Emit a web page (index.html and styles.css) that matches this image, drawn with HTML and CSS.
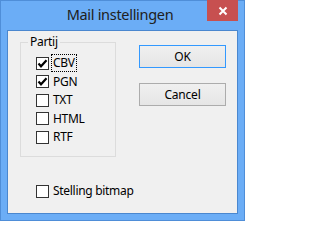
FILE: index.html
```html
<!DOCTYPE html>
<html>
<head>
<meta charset="utf-8">
<link rel="stylesheet" href="styles.css">
</head>
<body>
<div class="window">
  <div class="titlebar">
    <span class="spacer"></span>
    <span class="title">Mail instellingen</span>
    <span class="close">
      <svg width="10" height="10" viewBox="0 0 10 10"><path d="M1.5 1.5 L8.5 8.5 M8.5 1.5 L1.5 8.5" stroke="#fff" stroke-width="2" fill="none"/></svg>
    </span>
  </div>
  <div class="client">
    <div class="top">
      <div class="group">
        <span class="legend">Partij</span>
        <div class="row"><span class="box checked"><svg width="11" height="11" viewBox="0 0 11 11"><path d="M1.5 5.5 L4 8.3 L9.5 2.3" stroke="#000" stroke-width="2.2" fill="none"/></svg></span><span class="label focus">CBV</span></div>
        <div class="row"><span class="box checked"><svg width="11" height="11" viewBox="0 0 11 11"><path d="M1.5 5.5 L4 8.3 L9.5 2.3" stroke="#000" stroke-width="2.2" fill="none"/></svg></span><span class="label">PGN</span></div>
        <div class="row"><span class="box"></span><span class="label">TXT</span></div>
        <div class="row"><span class="box"></span><span class="label">HTML</span></div>
        <div class="row"><span class="box"></span><span class="label">RTF</span></div>
      </div>
      <div class="buttons">
        <button class="btn default">OK</button>
        <button class="btn">Cancel</button>
      </div>
    </div>
    <div class="row bottom-row"><span class="box"></span><span class="label">Stelling bitmap</span></div>
  </div>
</div>
</body>
</html>
```

FILE: styles.css
```css
html, body {
  margin: 0;
  padding: 0;
}
body {
  width: 245px;
  height: 221px;
  overflow: hidden;
  font-family: "Noto Sans", "Liberation Sans", sans-serif;
  font-size: 12px;
  letter-spacing: -0.3px;
  color: #000;
}
.window {
  box-sizing: border-box;
  width: 245px;
  height: 221px;
  background: #6badf6;
  border: 1px solid #4f8ed8;
  padding: 0 6px 6px 6px;
  display: flex;
  flex-direction: column;
}
.titlebar {
  height: 29px;
  display: grid;
  grid-template-columns: 1fr auto 1fr;
  margin: 0 -6px;
  padding: 0 6px;
}
.title {
  font-size: 14.5px;
  letter-spacing: -0.3px;
  line-height: 20px;
  padding-top: 3px;
  padding-right: 5px;
  color: #202020;
  white-space: nowrap;
}
.close {
  justify-self: end;
  align-self: start;
  width: 31px;
  height: 21px;
  margin-top: -1px;
  background: #c75050;
  display: flex;
  align-items: center;
  justify-content: center;
}
.close svg { display: block; }
.client {
  flex: 1;
  background: #f0f0f0;
  border: 1px solid #4a87cf;
  padding: 11px 0 0 12px;
}
.top {
  display: flex;
  align-items: flex-start;
}
.group {
  box-sizing: border-box;
  width: 96px;
  height: 115px;
  border: 1px solid #dcdcdc;
  padding: 0 0 0 15px;
}
.legend {
  display: block;
  width: fit-content;
  margin: -9px 0 4px -8px;
  padding: 0 2px;
  line-height: 16px;
  background: #f0f0f0;
}
.row {
  display: flex;
  align-items: center;
  height: 18.5px;
}
.box {
  box-sizing: border-box;
  width: 13px;
  height: 13px;
  border: 1px solid #333;
  background: #fff;
  display: flex;
  align-items: center;
  justify-content: center;
  flex: none;
}
.box svg { display: block; }
.label {
  margin-left: 2px;
  padding: 0 1px;
  line-height: 16px;
  border: 1px solid transparent;
  white-space: nowrap;
}
.label.focus {
  border: 1px dotted #000;
}
.buttons {
  margin-left: 23px;
  margin-top: 3px;
  display: flex;
  flex-direction: column;
  gap: 15px;
}
.btn {
  box-sizing: border-box;
  width: 87px;
  height: 23px;
  margin: 0;
  padding: 0;
  font-family: "Noto Sans", "Liberation Sans", sans-serif;
  font-size: 12px;
  letter-spacing: -0.2px;
  color: #000;
  background: linear-gradient(#f0f0f0, #e5e5e5);
  border: 1px solid #acacac;
  border-radius: 0;
}
.btn.default {
  border-color: #3399ff;
}
.bottom-row {
  margin-top: 25px;
  margin-left: 16px;
}
```
